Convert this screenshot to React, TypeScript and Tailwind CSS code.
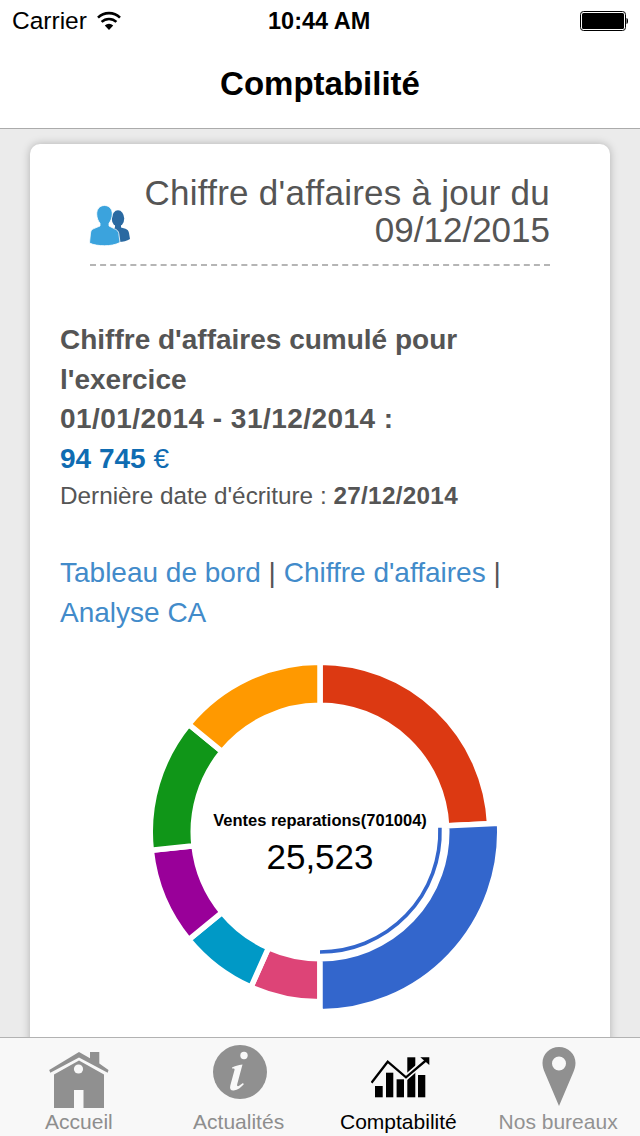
const polar = (r: number, a: number): [number, number] => {
  const t = (a * Math.PI) / 180;
  return [180 + r * Math.sin(t), 180 - r * Math.cos(t)];
};

const GAP = 5.5;

function sector(a0: number, a1: number, R: number, r: number) {
  const [x0, y0] = polar(R, a0);
  const [x1, y1] = polar(R, a1);
  const [x2, y2] = polar(r, a1);
  const [x3, y3] = polar(r, a0);
  return `M${x0} ${y0}A${R} ${R} 0 0 1 ${x1} ${y1}L${x2} ${y2}A${r} ${r} 0 0 0 ${x3} ${y3}Z`;
}

const segments = [
  { a0: 0, a1: 87.2, R: 167, c: "#dc3912" },
  { a0: 180, a1: 204, R: 167, c: "#dd4477" },
  { a0: 204, a1: 230.6, R: 167, c: "#0099c6" },
  { a0: 230.6, a1: 263.8, R: 167, c: "#990099" },
  { a0: 263.8, a1: 309.4, R: 167, c: "#109618" },
  { a0: 309.4, a1: 360, R: 167, c: "#ff9900" },
  { a0: 87.2, a1: 180, R: 177, c: "#3366cc" },
];

function Donut() {
  const [ax, ay] = polar(120, 88);
  const [bx, by] = polar(120, 180);
  return (
    <div className="relative mx-auto mt-[19px] h-[360px] w-[360px]">
      <svg width="360" height="360" viewBox="0 0 360 360" className="block">
        {segments.map((s) => (
          <path
            key={s.c}
            d={sector(s.a0, s.a1, s.R + GAP / 2, 129.5 - GAP / 2)}
            fill={s.c}
            stroke="#ffffff"
            strokeWidth={GAP}
          />
        ))}
        <path d={`M${ax} ${ay}A120 120 0 0 1 ${bx} ${by}`} fill="none" stroke="#3366cc" strokeWidth="3.6" />
      </svg>
      <div className="absolute left-0 top-[158px] w-full text-center text-[16.500px] font-bold leading-[20px] text-[#000]">
        Ventes reparations(701004)
      </div>
      <div className="absolute left-0 top-[185px] w-full text-center text-[35px] leading-[40px] text-[#000]">
        25,523
      </div>
    </div>
  );
}

function Wifi() {
  return (
    <svg width="26" height="20" viewBox="0 0 26 20" className="block">
      <path d="M13 19l-4.200-4.600a6 6 0 0 1 8.400 0Z" fill="#000" />
      <path d="M5.600 10.900a10.600 10.600 0 0 1 14.800 0" fill="none" stroke="#000" strokeWidth="2.500" />
      <path d="M2 6.600a15.800 15.800 0 0 1 22 0" fill="none" stroke="#000" strokeWidth="2.600" />
    </svg>
  );
}

function Battery() {
  return (
    <svg width="48" height="20" viewBox="0 0 48 20" className="block">
      <rect x="0.500" y="0.500" width="45" height="19" rx="3" fill="#fff" stroke="#000" strokeWidth="1" />
      <rect x="2" y="2" width="42" height="16" rx="1.500" fill="#000" />
      <path d="M46.500 7c1 .3 1.500 1.300 1.500 3s-.5 2.700-1.500 3Z" fill="#000" />
    </svg>
  );
}

function People() {
  return (
    <svg width="41" height="41" viewBox="0 0 41 41" className="block">
      <ellipse cx="29" cy="13.500" rx="6.200" ry="8.300" fill="#2a69a1" />
      <path d="M26 19v3.500L21 26v11l9 0c4 0 8-1 11-3l-1-6c-.4-2.300-1.500-3.500-3.500-4.300L32 22.500V19Z" fill="#2a69a1" />
      <path
        d="M15.500.500c4.700 0 7.800 3.500 7.800 8.500 0 4-2 7.600-3.300 9.300v2.700l6.500 3.300c2 1 3 2.300 3.300 4.300L31 37.500C26 40 21 40.700 15.500 40.700S4.500 40 .5 38L1.500 28c.3-2 1.300-3.500 3.300-4.400L11 21v-2.700C9.500 16.600 7.700 13 7.700 9c0-5 3-8.500 7.800-8.500Z"
        fill="#3ba3dd"
        stroke="#ffffff"
        strokeWidth="0.800"
      />
    </svg>
  );
}

function HomeIcon() {
  return (
    <svg width="60" height="57" viewBox="0 0 60 57" className="block">
      <g fill="#909090">
        <path d="M30 0l11 6.200V0h9.300v11.500L59.500 18l-.8 2.700L30 5.500 1.300 20.700.2 18Z" />
        <path d="M5 22.500 30 8.500l25 14V56H34.500V38h-9.500v18H5Z" />
      </g>
      <circle cx="29.500" cy="17" r="4.600" fill="#f8f8f8" />
    </svg>
  );
}

function InfoIcon() {
  return (
    <svg width="54" height="54" viewBox="0 0 54 54" className="block">
      <circle cx="27" cy="27" r="27" fill="#909090" />
      <circle cx="31" cy="10.500" r="3.700" fill="#f8f8f8" />
      <path d="M19 22.500c3-1.400 6-2.500 10.500-3l-5.300 19.800c-.5 2 .8 2.300 2.200 1.300l3.600-2.700.8 1.300c-3 3.300-6 5.900-10 6.300-3 .3-4.400-1.500-3.500-5l4.200-15.500c.3-1.300-.3-1.800-2.300-1.400Z" fill="#f8f8f8" />
    </svg>
  );
}

function ChartIcon() {
  return (
    <svg width="60" height="44" viewBox="0 0 60 44" className="block">
      <g fill="#000">
        <rect x="4" y="31" width="7.700" height="11.300" />
        <rect x="15" y="17.700" width="7.300" height="24.600" />
        <rect x="25.600" y="24.300" width="7.400" height="18" />
        <rect x="36.300" y="2.300" width="8" height="40" />
        <rect x="47" y="20" width="7.300" height="22.300" />
      </g>
      <path d="M0 27.700 16.700 6.700 35 22.300 56 4" fill="none" stroke="#f8f8f8" strokeWidth="5.500" />
      <path d="M.5 27.700 16.700 6.700 35 22.300 56 4.500" fill="none" stroke="#000" strokeWidth="2.300" />
      <path d="M49.300 2.300h9V10Z" fill="#000" />
    </svg>
  );
}

function PinIcon() {
  return (
    <svg width="34" height="60" viewBox="0 0 34 60" className="block">
      <path fillRule="evenodd" d="M17 0c9.400 0 16.500 7.200 16.500 16 0 3.500-1 6.500-2.500 10L17 59 3 26C1.500 22.500.5 19.500.5 16 .5 7.200 7.600 0 17 0Zm0 9.500a7 7 0 1 0 0 14 7 7 0 0 0 0-14Z" fill="#909090" />
    </svg>
  );
}

const tabs = [
  { label: "Accueil", icon: <HomeIcon />, cls: "text-[#8e8e8e]", pad: "pt-[14px] pr-[1px]" },
  { label: "Actualités", icon: <InfoIcon />, cls: "text-[#8e8e8e]", pad: "pt-[7px]" },
  { label: "Comptabilité", icon: <ChartIcon />, cls: "text-[#000]", pad: "pt-[17px] pl-[3px]" },
  { label: "Nos bureaux", icon: <PinIcon />, cls: "text-[#929292]", pad: "pt-[9px]" },
];

export default function App() {
  return (
    <div className="flex h-[1136px] w-[640px] flex-col overflow-hidden bg-[#ebebeb] font-['Liberation_Sans',Arial,sans-serif]">
      <header className="shrink-0 border-b border-[#ababab] bg-white">
        <div className="relative flex h-[40px] items-center justify-between px-[12px] pt-[2px]">
          <div className="flex items-center gap-[9px] text-[24.500px] leading-none text-black">
            <span>Carrier</span>
            <Wifi />
          </div>
          <span className="absolute left-[268px] top-[9px] text-[23.500px] font-bold leading-[24px] text-black">10:44 AM</span>
          <Battery />
        </div>
        <div className="flex h-[88px] items-center justify-center pb-[2px] text-[33px] font-bold leading-none text-black">
          Comptabilité
        </div>
      </header>

      <main className="min-h-0 flex-1 overflow-hidden px-[30px] pt-[15px]">
        <div className="rounded-[10px] bg-white px-[30px] pb-[40px] pt-[30px] shadow-[0_0_8px_rgba(0,0,0,0.25)]">
          <div className="mx-[30px] border-b-2 border-dashed border-[#b5b5b5] pb-[16px]">
            <div className="flex items-end justify-between">
              <div className="mb-[2px] -ml-[1px] shrink-0"><People /></div>
              <h1 className="text-right text-[35px] font-normal leading-[37px] text-[#555555]">
                <span className="tracking-[0.25px]">Chiffre d'affaires à jour du</span>
                <br />
                09/12/2015
              </h1>
            </div>
          </div>

          <div className="mt-[54px] text-[28px] font-bold leading-[39.700px] text-[#555555]">
            <p>Chiffre d'affaires cumulé pour</p>
            <p>l'exercice</p>
            <p className="tracking-[0.45px]">01/01/2014 - 31/12/2014 :</p>
            <p className="text-[#0f6cb2]">
              94 745 <span className="font-normal">€</span>
            </p>
          </div>
          <p className="text-[24.300px] leading-[34px] text-[#555555]">
            Dernière date d'écriture : <b className="tracking-[0.3px]">27/12/2014</b>
          </p>

          <p className="mt-[40px] text-[28px] leading-[40px] text-[#555555]">
            <span className="text-[#428bca]">Tableau de bord</span> | <span className="text-[#428bca]">Chiffre d'affaires</span> |
            <br />
            <span className="text-[#428bca]">Analyse CA</span>
          </p>

          <Donut />
        </div>
      </main>

      <nav className="grid h-[99px] shrink-0 grid-cols-4 border-t border-[#b2b2b2] bg-[#f8f8f8] pr-[1px]">
        {tabs.map((t) => (
          <div key={t.label} className="flex flex-col items-center">
            <div className={`h-[72px] ${t.pad}`}>{t.icon}</div>
            <span className={`pr-[2px] text-[21px] leading-[24px] ${t.cls}`}>{t.label}</span>
          </div>
        ))}
      </nav>
    </div>
  );
}
